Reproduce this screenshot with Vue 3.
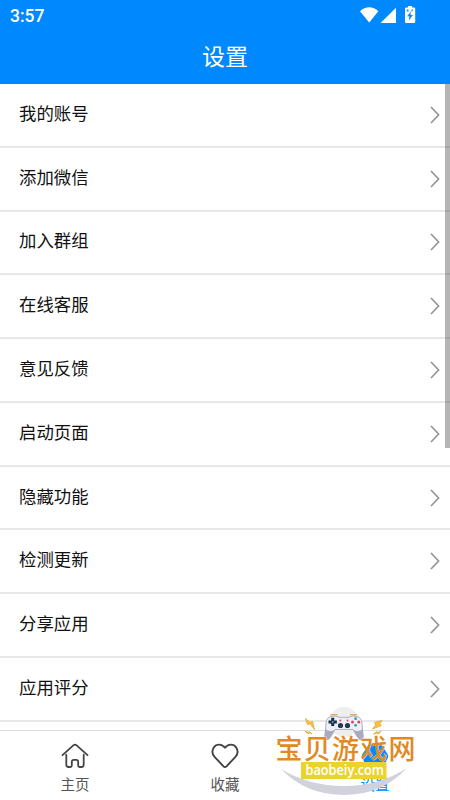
<script setup>
const rows = ['我的账号', '添加微信', '加入群组', '在线客服', '意见反馈', '启动页面', '隐藏功能', '检测更新', '分享应用', '应用评分']
</script>

<template>
  <div class="screen">
    <header class="header">
      <div class="status">
        <span class="time">3:57</span>
        <svg class="status-icons" width="58" height="20" viewBox="0 0 58 20" fill="#fff">
          <path d="M2 5.200C7.400-.2 15-.2 20.400 5.200L11.200 16.500Z" />
          <path d="M22.500 17L38 1.700V17Z" />
          <path d="M50 0H54V1.500H56Q57.200 1.500 57.200 2.700V15.800Q57.200 17 56 17H48.200Q47 17 47 15.800V2.700Q47 1.500 48.200 1.500H50Z" />
          <path d="M52.800 5.500L49.200 10.200H51.400L50.900 14.500L54.900 9H52.500ZM48.800 3.500H50.500V5.500H48.800ZM53.800 3.500H55.200L54.200 5.500H53.200Z" fill="#0088ff" />
        </svg>
      </div>
      <h1 class="title">设置</h1>
    </header>

    <main class="list">
      <div v-for="row in rows" :key="row" class="row">
        <span>{{ row }}</span>
        <svg class="chevron" width="10" height="18" viewBox="0 0 10 18" fill="none" stroke="#929292" stroke-width="1.600">
          <path d="M1 1L8.600 9L1 17" />
        </svg>
      </div>
      <div class="scrollbar"></div>
    </main>

    <nav class="tabs">
      <div class="tab">
        <svg width="28" height="28" viewBox="0 0 28 28" fill="none" stroke="#444" stroke-width="1.800" stroke-linecap="round" stroke-linejoin="round">
          <path d="M1.500 13.200L12.600 3.200Q14 2 15.400 3.200L26.500 13.200M5.300 12.700V22.800Q5.300 25 7.500 25H9.400Q10.800 25 10.800 23.600V19.800Q10.800 17.800 12.800 17.800H15.200Q17.200 17.800 17.200 19.800V23.600Q17.200 25 18.600 25H20.500Q22.700 25 22.700 22.800V12.700" />
        </svg>
        <span>主页</span>
      </div>
      <div class="tab">
        <svg width="28" height="28" viewBox="0 0 28 28" fill="none" stroke="#444" stroke-width="1.900" stroke-linejoin="round">
          <path d="M14 5.800C10.800 1.500 5.300 1.700 2.800 5.500C.5 9 1.300 12.500 3.800 15.200L12.500 24.300Q14 25.800 15.500 24.300L24.200 15.200C26.700 12.500 27.500 9 25.200 5.500C22.700 1.700 17.200 1.500 14 5.800Z" />
        </svg>
        <span>收藏</span>
      </div>
      <div class="tab active">
        <svg width="28" height="28" viewBox="0 0 28 28" fill="#0088ff">
          <path d="M10.500 1.500H17.500Q19.500 1.500 21 3.500L26.500 12Q27.800 14 26.800 16L22.500 24Q21.500 26 19.500 26H8.500Q6.500 26 5.500 24L1.200 16Q.2 14 1.500 12L7 3.500Q8.500 1.500 10.500 1.500Z" />
        </svg>
        <span>设置</span>
      </div>
    </nav>

    <svg class="brand" width="160" height="105" viewBox="265 695 160 105">
      <circle cx="344" cy="722" r="15" fill="#eeeeef" />
      <path d="M281 769Q309 786 344 786Q379 786 407 768Q382 795 344 795Q306 795 281 769Z" fill="#d2d2dc" />
      <g fill="#f8c43c" stroke="#e2ab40" stroke-width=".9" stroke-linejoin="round">
        <path d="M305.500 718.500L307.500 724.700L310 723.700L314.500 729.500L312.500 721.500L310 722.300Z" />
        <path d="M382 720.500L374.500 722.500L375.800 725L372.500 729L381.300 725.500L379.800 723.500Z" />
        <path d="M305 731L308.500 734L309.500 732.700L312 734L309.500 731.500L308.500 732.500ZM373.500 734L377 731.500L378 732.700L381 731L378.500 734L377 733Z" />
      </g>
      <path d="M331 714.800H337M350.500 714.800H356.500" stroke="#e0b160" stroke-width="1.600" stroke-linecap="round" />
      <path d="M331 716.500Q336 715 339 717.300H349Q352 715 357 716.500Q361.500 717.500 362 723Q362.500 730 363.300 736Q363 741 359.500 739.500Q356 736 353 729.500H335Q332 736 328.500 739.500Q325 741 324.700 736Q325.500 730 326 723Q326.500 717.500 331 716.500Z" fill="#eeeef6" stroke="#a1a0b4" stroke-width=".8" />
      <path d="M325.500 729Q324.500 735 325.200 739Q328 741 331 736.500L334.500 730Q329 732.500 325.500 729ZM362.500 729Q363.500 735 362.800 739Q360 741 357 736.500L353.500 730Q359 732.500 362.500 729Z" fill="#aaa9bd" />
      <path d="M332.700 717.700V726M328.500 721.900H336.900" stroke="#17334a" stroke-width="3" />
      <circle cx="332.700" cy="722" r="1" fill="#819ca8" />
      <g fill="#23394c"><circle cx="340.500" cy="725.500" r="2.600" /><circle cx="347.500" cy="725.500" r="2.600" /></g>
      <g fill="#d74762"><circle cx="340.300" cy="720.500" r="1" /><circle cx="347.500" cy="720.500" r="1" /><circle cx="358.800" cy="722" r="1.500" /><circle cx="352.500" cy="722" r="1.500" /></g>
      <g fill="#2e9fae"><circle cx="355.600" cy="718.700" r="1.400" /><circle cx="355.600" cy="725.300" r="1.400" /></g>
      <text class="brand-name" x="275.500" y="758.500" textLength="140">宝贝游戏网</text>
      <rect x="301" y="762" width="85.500" height="17" fill="#ebd32e" />
      <text class="brand-url" x="305.500" y="775" textLength="78.500" lengthAdjust="spacingAndGlyphs">baobeiy.com</text>
    </svg>
  </div>
</template>

<style>
body { margin: 0; background: #fff; }
</style>

<style scoped>
.screen {
  position: relative;
  display: flex;
  flex-direction: column;
  width: 450px;
  height: 800px;
  overflow: hidden;
  background: #fff;
  font-family: "Noto Sans CJK SC", sans-serif;
}
.header { flex: none; height: 83.500px; background: #08f; color: #fff; }
.status { display: flex; justify-content: space-between; height: 32px; padding: 0 34px 0 10px; box-sizing: border-box; }
.time { padding-top: 6px; font: 500 17.500px/20px Roboto, sans-serif; }
.status-icons { margin-top: 6px; }
.title { margin: 6px 0 0; text-align: center; font-size: 23px; line-height: 34px; font-weight: 400; }
.list { position: relative; flex: none; height: 647.500px; border-bottom: 1px solid #ddd; box-sizing: border-box; padding-top: .5px; }
.row {
  display: flex;
  align-items: center;
  justify-content: space-between;
  height: 63.790px;
  padding: 0 10px 0 19px;
  box-sizing: border-box;
  border-bottom: 2px solid #e7e7e7;
  color: #111;
  font-size: 17.400px;
}
.row span { line-height: 26px; padding-bottom: 4px; }
.scrollbar { position: absolute; top: 0; right: 0; width: 5px; height: 364px; background: rgba(0, 0, 0, .29); }
.tabs { display: grid; grid-template-columns: repeat(3, 1fr); flex: 1; }
.tab { display: flex; flex-direction: column; align-items: center; padding-top: 11px; color: #555; font-size: 14.500px; line-height: 22px; }
.tab span { margin-top: 3px; }
.tab.active { color: #08f; }
.brand { position: absolute; left: 265px; top: 695px; }
.brand-name { font-family: "Noto Sans CJK SC", sans-serif; font-size: 27px; font-weight: 500; fill: #df8a25; stroke: #fff; stroke-width: .5px; paint-order: stroke; }
.brand-url { font-family: "Open Sans", sans-serif; font-size: 15px; font-weight: 600; fill: #fff; }
</style>
